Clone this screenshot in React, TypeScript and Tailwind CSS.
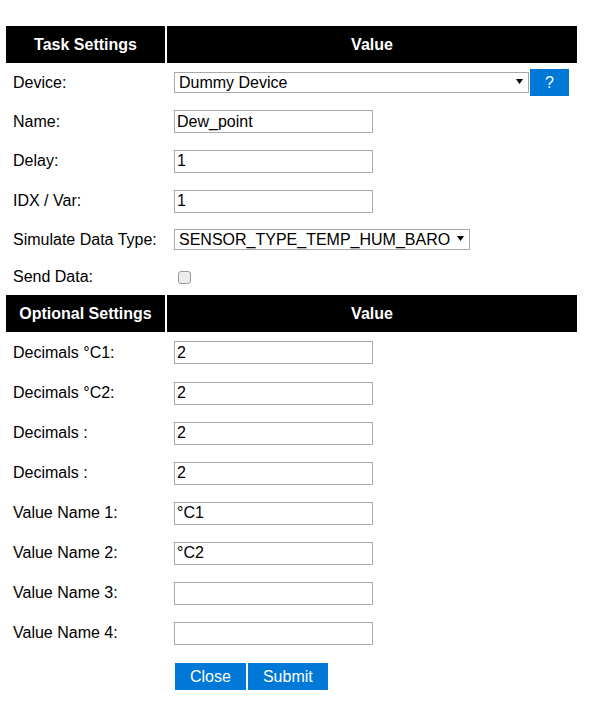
import React from 'react';

const font = { fontFamily: '"Liberation Sans", Arial, sans-serif' };

const HeaderRow: React.FC<{ title: string }> = ({ title }) => (
    <div className="flex h-[37px] gap-[2px] font-bold text-white text-[16px]">
        <div className="w-[159px] bg-black flex items-center justify-center">{title}</div>
        <div className="w-[410px] bg-black flex items-center justify-center">Value</div>
    </div>
);

const Row: React.FC<{ label: string; h?: string; children?: React.ReactNode }> = ({ label, h = 'h-[40px]', children }) => (
    <div className={`flex items-center ${h}`}>
        <div className="w-[161px] pl-[7px] text-[16px] text-black">{label}</div>
        <div className="flex items-center pl-[7px]">{children}</div>
    </div>
);

const TextInput: React.FC<{ value?: string }> = ({ value = '' }) => (
    <input
        type="text"
        defaultValue={value}
        className="w-[199px] h-[23px] border border-[#a9a9a9] px-[2px] text-[16px] text-black bg-white outline-none"
    />
);

const Select: React.FC<{ value: string; width: string }> = ({ value, width }) => (
    <div className={`relative ${width}`}>
        <select
            defaultValue={value}
            className="appearance-none w-full h-[21px] border border-[#a9a9a9] pl-[4px] pr-[16px] text-[16px] leading-[19px] text-black bg-white outline-none"
        >
            <option>{value}</option>
        </select>
        <svg className="pointer-events-none absolute right-[6px] top-[8px]" width="7" height="5" viewBox="0 0 7 5">
            <path d="M0 0H7L3.5 5Z" fill="#000" />
        </svg>
    </div>
);

const BlueButton: React.FC<{ children: React.ReactNode }> = ({ children }) => (
    <button className="h-[27px] px-[15px] bg-[#0078d7] text-white text-[16px] leading-none">{children}</button>
);

export default function App() {
    return (
        <div style={font} className="bg-white w-[595px] h-[708px] pl-[6px] pt-[26px]">
            <div className="w-[571px] flex flex-col">
                <HeaderRow title="Task Settings" />
                <Row label="Device:" h="h-[39px]">
                    <Select value="Dummy Device" width="w-[355px]" />
                    <div className="ml-[1px]">
                        <BlueButton>?</BlueButton>
                    </div>
                </Row>
                <Row label="Name:" h="h-[39px]">
                    <TextInput value="Dew_point" />
                </Row>
                <Row label="Delay:">
                    <TextInput value="1" />
                </Row>
                <Row label="IDX / Var:">
                    <TextInput value="1" />
                </Row>
                <Row label="Simulate Data Type:" h="h-[38px]">
                    <Select value="SENSOR_TYPE_TEMP_HUM_BARO" width="w-[296px]" />
                </Row>
                <Row label="Send Data:" h="h-[36px]">
                    <input
                        type="checkbox"
                        className="appearance-none ml-[4px] w-[13px] h-[13px] rounded-[3px] border border-[#9a9a9a] bg-[#ececec]"
                    />
                </Row>
                <HeaderRow title="Optional Settings" />
                <Row label={'Decimals \u00b0C1:'} h="h-[41px]">
                    <TextInput value="2" />
                </Row>
                <Row label={'Decimals \u00b0C2:'}>
                    <TextInput value="2" />
                </Row>
                <Row label="Decimals :">
                    <TextInput value="2" />
                </Row>
                <Row label="Decimals :">
                    <TextInput value="2" />
                </Row>
                <Row label="Value Name 1:">
                    <TextInput value={'\u00b0C1'} />
                </Row>
                <Row label="Value Name 2:">
                    <TextInput value={'\u00b0C2'} />
                </Row>
                <Row label="Value Name 3:">
                    <TextInput />
                </Row>
                <Row label="Value Name 4:">
                    <TextInput />
                </Row>
                <div className="flex gap-[2px] pl-[169px] mt-[10px]">
                    <BlueButton>Close</BlueButton>
                    <BlueButton>Submit</BlueButton>
                </div>
            </div>
        </div>
    );
}
